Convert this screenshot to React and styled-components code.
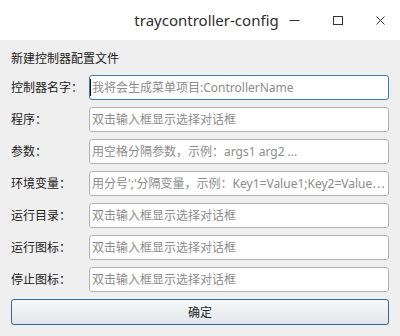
import React from 'react'
import styled, { createGlobalStyle } from 'styled-components'

const GlobalStyle = createGlobalStyle`
html, body {
    margin: 0;
    padding: 0;
    background: #efefef;
}
body {
    font-family: "Noto Sans", "Noto Sans CJK SC", sans-serif;
    color: #222;
}
`

const Window = styled.div`
width: 400px;
height: 336px;
display: flex;
flex-direction: column;
background: #efefef;
overflow: hidden;
`

const TitleBar = styled.div`
height: 40px;
background: #ffffff;
display: grid;
flex-shrink: 0;

& > * {
    grid-area: 1 / 1;
}
`

const Title = styled.div`
align-self: center;
text-align: center;
padding-left: 13px;
font-size: 15px;
line-height: 20px;
color: #2e2e2e;
`

const Controls = styled.div`
justify-self: end;
display: flex;
margin-right: -2px;
`

const ControlButton = styled.div`
width: 43px;
height: 40px;
display: flex;
align-items: center;
justify-content: center;

svg {
    display: block;
}
`

const Content = styled.div`
display: flex;
flex-direction: column;
gap: 7px;
padding: 10px 11px 11px;
`

const Heading = styled.div`
height: 18px;
line-height: 18px;
font-size: 12px;
`

const Row = styled.div`
display: grid;
grid-template-columns: 78px 1fr;
align-items: center;
height: 25px;
`

const Label = styled.label`
font-size: 12px;
line-height: 16px;
white-space: nowrap;
`

const Field = styled.div`
position: relative;
height: 25px;
`

// text cursor drawn in the focused field, so the shot doesn't depend on blinking
const Caret = styled.span`
position: absolute;
left: 1px;
top: 4px;
width: 1px;
height: 17px;
background: #111;
`

const Input = styled.input`
box-sizing: border-box;
width: 100%;
height: 25px;
margin: 0;
padding: 0 4px 0 2px;
border: 1px solid ${p => (p.$active ? '#3b7ab3' : '#b3b3b3')};
border-radius: 3px;
background: #ffffff;
font-family: "Noto Sans", "Noto Sans CJK SC", sans-serif;
font-size: 12px;
color: #222;
outline: none;
caret-color: transparent;

&::placeholder {
    color: #8c8c8c;
    opacity: 1;
}
`

const Button = styled.button`
box-sizing: border-box;
height: 26px;
width: 100%;
margin: 0;
border: 1px solid #2f6a9c;
border-radius: 3px;
background: linear-gradient(to bottom, #f7f8fa, #e2e6ea);
font-family: "Noto Sans", "Noto Sans CJK SC", sans-serif;
font-size: 12px;
color: #1e1e1e;
padding: 0;
`

const fields = [
    { label: '控制器名字：', placeholder: '我将会生成菜单项目:ControllerName', active: true },
    { label: '程序：', placeholder: '双击输入框显示选择对话框' },
    { label: '参数：', placeholder: '用空格分隔参数，示例：args1 arg2 ...' },
    { label: '环境变量：', placeholder: "用分号';'分隔变量，示例：Key1=Value1;Key2=Value⋯" },
    { label: '运行目录：', placeholder: '双击输入框显示选择对话框' },
    { label: '运行图标：', placeholder: '双击输入框显示选择对话框' },
    { label: '停止图标：', placeholder: '双击输入框显示选择对话框' },
]

const App = () => (
    <Window>
        <GlobalStyle />
        <TitleBar>
            <Title>traycontroller-config</Title>
            <Controls>
                <ControlButton>
                    <svg width="11" height="11" viewBox="0 0 11 11">
                        <path d="M0.5 5.5h10" stroke="#333" strokeWidth="1" fill="none" />
                    </svg>
                </ControlButton>
                <ControlButton>
                    <svg width="11" height="11" viewBox="0 0 11 11">
                        <rect x="1.5" y="1.5" width="9" height="8" stroke="#333" strokeWidth="1" fill="none" />
                    </svg>
                </ControlButton>
                <ControlButton>
                    <svg width="11" height="11" viewBox="0 0 11 11">
                        <path d="M1.5 1.5l8 8M9.5 1.5l-8 8" stroke="#333" strokeWidth="1" fill="none" />
                    </svg>
                </ControlButton>
            </Controls>
        </TitleBar>
        <Content>
            <Heading>新建控制器配置文件</Heading>
            {fields.map((f, i) => (
                <Row key={i}>
                    <Label>{f.label}</Label>
                    <Field>
                        <Input placeholder={f.placeholder} $active={f.active} readOnly={!f.active} />
                        {f.active ? <Caret /> : null}
                    </Field>
                </Row>
            ))}
            <Button>确定</Button>
        </Content>
    </Window>
)

export default App
